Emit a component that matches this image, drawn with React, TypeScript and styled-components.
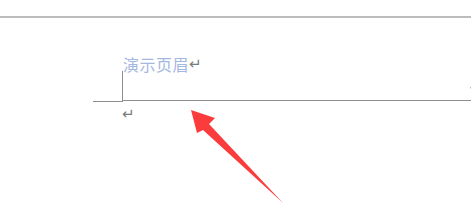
import React from 'react';
import styled, { createGlobalStyle } from 'styled-components';

const GlobalStyle = createGlobalStyle`
  html, body {
    margin: 0;
    padding: 0;
    background: #ffffff;
    overflow: hidden;
  }
  body {
    font-family: "Noto Sans CJK SC", "Noto Sans", sans-serif;
  }
`;

const Page = styled.div`
  position: relative;
  width: 471px;
  height: 218px;
  overflow: hidden;
  padding-top: 16px;
  box-sizing: border-box;
`;

const TopRule = styled.div`
  height: 2px;
  background: #bcbcbc;
`;

const HeaderLine = styled.div`
  display: flex;
  align-items: center;
  height: 24px;
  margin-top: 34px;
  padding-left: 123px;
`;

const HeaderText = styled.span`
  font-size: 16px;
  letter-spacing: 0.5px;
  line-height: 24px;
  color: #a4b7df;
`;

const ParaMark = styled.span<{ $size?: number }>`
  font-family: "DejaVu Sans", sans-serif;
  font-size: ${({ $size }) => $size ?? 12}px;
  line-height: 1;
  color: #7a7a7a;
`;

const CornerRow = styled.div`
  display: flex;
  height: 31px;
  margin-top: -5px;
  padding-left: 93px;
`;

const CornerLeft = styled.div`
  width: 29px;
  border-bottom: 1px solid #8e8e8e;
`;

const CornerRight = styled.div`
  flex: 1;
  display: flex;
  flex-direction: column;
  justify-content: space-between;
  border-left: 1px solid #8e8e8e;
`;

const EdgeMark = styled.div`
  align-self: flex-end;
  margin-top: 12px;
  margin-right: -7px;
  color: #9a9a9a;
  font-family: "DejaVu Sans", sans-serif;
  font-size: 10px;
  line-height: 1;
`;

const BottomRule = styled.div`
  height: 1px;
  margin-bottom: 1px;
  background: #8e8e8e;
`;

const BodyLine = styled.div`
  padding-left: 122px;
  margin-top: -2px;
`;

const Arrow = styled.svg`
  position: absolute;
  left: 0;
  top: 0;
`;

export default function App() {
  return (
    <>
      <GlobalStyle />
      <Page>
        <TopRule />
        <HeaderLine>
          <HeaderText>演示页眉</HeaderText>
          <ParaMark $size={15}>↵</ParaMark>
        </HeaderLine>
        <CornerRow>
          <CornerLeft />
          <CornerRight>
            <EdgeMark>↵</EdgeMark>
            <BottomRule />
          </CornerRight>
        </CornerRow>
        <BodyLine>
          <ParaMark $size={15}>↵</ParaMark>
        </BodyLine>
        <Arrow width="471" height="218" viewBox="0 0 471 218">
          <polygon
            points="191,110 215,118 209,124 283,203 203,130 197,133"
            fill="#fb3c3c"
          />
        </Arrow>
      </Page>
    </>
  );
}
